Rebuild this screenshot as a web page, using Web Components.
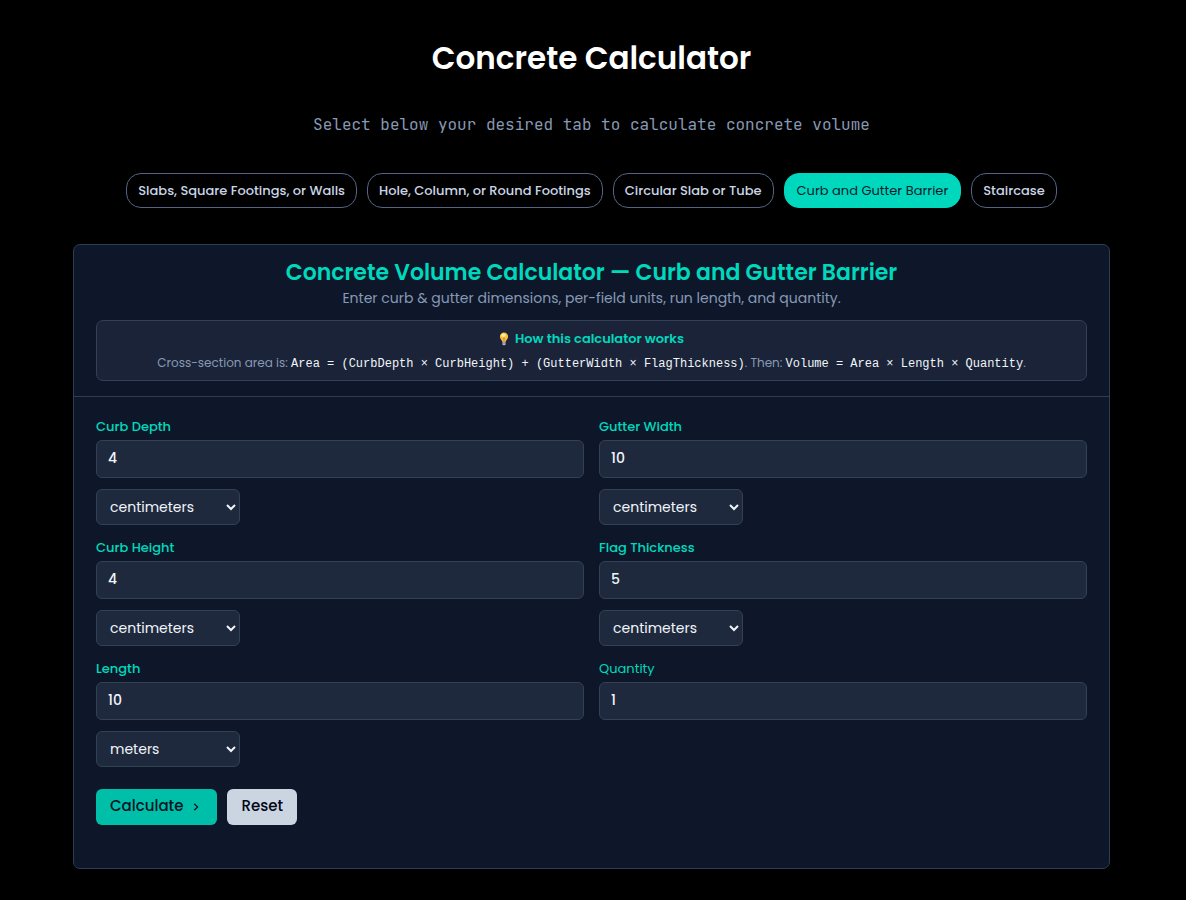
<!DOCTYPE html>
<html lang="en">
<head>
<meta charset="utf-8">
<meta name="viewport" content="width=device-width, initial-scale=1">
<title>Concrete Calculator</title>
<style>
  :root {
    --accent: #00d8bd;
    --accent-strong: #00bfa9;
    --panel: #0e1729;
    --note: #1a2338;
    --control: #1e293e;
    --line: #2c3d54;
    --control-line: #334155;
    --muted: #8799b5;
    --text: #f1f5f9;
    --mono: "JetBrains Mono", "Liberation Mono", "DejaVu Sans Mono", monospace;
    --code: Consolas, "Liberation Mono", "DejaVu Sans Mono", monospace;
  }
  body {
    margin: 0;
    background: #000;
    color: var(--text);
    font-family: Poppins, Inter, "Open Sans", sans-serif;
    font-size: 15px;
  }
</style>
</head>
<body>
<calc-page>
  <page-title slot="top">
    Concrete Calculator
    <span slot="lead">Select below your desired tab to calculate concrete volume</span>
  </page-title>
  <tab-list slot="top">
    <tab-pill>Slabs, Square Footings, or Walls</tab-pill>
    <tab-pill>Hole, Column, or Round Footings</tab-pill>
    <tab-pill>Circular Slab or Tube</tab-pill>
    <tab-pill selected>Curb and Gutter Barrier</tab-pill>
    <tab-pill>Staircase</tab-pill>
  </tab-list>
  <calc-panel>
    <span slot="heading">Concrete Volume Calculator — Curb and Gutter Barrier</span>
    <span slot="lead">Enter curb &amp; gutter dimensions, per-field units, run length, and quantity.</span>
    <help-note slot="note">
      <span slot="heading">How this calculator works</span>
      Cross-section area is: <formula-code>Area = (CurbDepth × CurbHeight) + (GutterWidth × FlagThickness)</formula-code>. Then: <formula-code>Volume = Area × Length × Quantity</formula-code>.
    </help-note>
    <measure-field label="Curb Depth" value="4" unit="centimeters"></measure-field>
    <measure-field label="Gutter Width" value="10" unit="centimeters"></measure-field>
    <measure-field label="Curb Height" value="4" unit="centimeters"></measure-field>
    <measure-field label="Flag Thickness" value="5" unit="centimeters"></measure-field>
    <measure-field label="Length" value="10" unit="meters"></measure-field>
    <measure-field label="Quantity" value="1"></measure-field>
    <action-button slot="actions" arrow>Calculate</action-button>
    <action-button slot="actions" secondary>Reset</action-button>
  </calc-panel>
</calc-page>

<script>
  class Base extends HTMLElement {
    constructor() {
      super();
      this.attachShadow({ mode: "open" });
    }
    connectedCallback() {
      this.shadowRoot.innerHTML = "<style>*{box-sizing:border-box}" + this.css() + "</style>" + this.html();
    }
  }

  customElements.define("calc-page", class extends Base {
    css() {
      return `:host{display:block;padding:33px 76px 31px 73px}
        main{display:block}`;
    }
    html() {
      return `<header><slot name="top"></slot></header><main><slot></slot></main>`;
    }
  });

  customElements.define("page-title", class extends Base {
    css() {
      return `:host{display:block;text-align:center}
        h1{margin:0;font-size:31px;line-height:50px;font-weight:600;color:#fff}
        p{margin:28px 0 0;font:16px/28px var(--mono);color:var(--muted)}`;
    }
    html() {
      return `<h1><slot></slot></h1><p><slot name="lead"></slot></p>`;
    }
  });

  customElements.define("tab-list", class extends Base {
    css() {
      return `:host{display:block;padding:34px 0 36px}
        div{display:flex;flex-wrap:wrap;justify-content:center;gap:10px}`;
    }
    html() {
      return `<div role="group" aria-label="Calculators"><slot></slot></div>`;
    }
  });

  customElements.define("tab-pill", class extends Base {
    css() {
      return `:host{display:block}
        button{height:35px;padding:0 11px;border:1px solid #536584;border-radius:15px;
          background:none;color:#cbd5e6;font-family:inherit;font-size:13px;font-weight:500;cursor:pointer;white-space:nowrap}
        :host([selected]) button{padding:0 12px;background:var(--accent);border-color:var(--accent);color:#0c1a2c;font-weight:400}`;
    }
    html() {
      return `<button type="button" aria-pressed="${this.hasAttribute("selected")}"><slot></slot></button>`;
    }
  });

  customElements.define("calc-panel", class extends Base {
    css() {
      return `:host{display:block;background:var(--panel);border:1px solid var(--line);border-radius:7px}
        header{padding:15px 22px;border-bottom:1px solid var(--line);text-align:center}
        h2{margin:0;font-size:22px;line-height:26px;font-weight:600;color:var(--accent)}
        p{margin:0 0 10px;font-size:14px;line-height:24px;color:var(--muted)}
        form{padding:20px 22px 43px}
        .fields{display:grid;grid-template-columns:1fr 1fr;gap:13px 15px}
        .actions{display:flex;gap:10px;margin-top:22px}`;
    }
    html() {
      return `<header><h2><slot name="heading"></slot></h2><p><slot name="lead"></slot></p><slot name="note"></slot></header>
        <form><div class="fields"><slot></slot></div><div class="actions"><slot name="actions"></slot></div></form>`;
    }
  });

  customElements.define("help-note", class extends Base {
    css() {
      return `:host{display:block;padding:6px 12px 5px;background:var(--note);border:1px solid var(--control-line);border-radius:7px}
        h3{display:flex;justify-content:center;align-items:center;gap:6px;margin:0;font-size:13px;line-height:24px;font-weight:600;color:var(--accent)}
        svg{display:block;width:10px;height:14px}
        p{margin:0;font-size:12px;line-height:24px;color:var(--muted)}`;
    }
    html() {
      return `<h3><svg viewBox="0 0 10 14" aria-hidden="true">
          <path d="M5 .5a4.1 4.1 0 0 0-4.1 4.2c0 2 1.8 2.9 2.3 5h3.6c.5-2.1 2.3-3 2.3-5A4.1 4.1 0 0 0 5 .5z" fill="#f9c03c"/>
          <path d="M4.1 5.6 4.5 9.8h1l.4-4.2z" fill="#e08a2c"/>
          <ellipse cx="4.4" cy="3.2" rx="2" ry="1.7" fill="#fff0a8"/>
          <path d="M3.5 9.6h3v2.6l-.8 1H4.3l-.8-1z" fill="#b9b3c6"/>
          <path d="M3.5 11.1h3" stroke="#817b94" stroke-width=".7"/>
        </svg><slot name="heading"></slot></h3><p><slot></slot></p>`;
    }
  });

  customElements.define("formula-code", class extends Base {
    css() {
      return `:host{display:inline}
        code{font:12px/20px var(--code);color:var(--text)}`;
    }
    html() { return `<code><slot></slot></code>`; }
  });

  customElements.define("measure-field", class extends Base {
    css() {
      return `:host{display:block}
        label{display:block;font-size:13px;line-height:20px;font-weight:500;color:var(--accent);margin-bottom:3px}
        :host(:not([unit])) label{font-weight:400}
        input,select{display:block;border:1px solid var(--control-line);border-radius:6px;background:var(--control);
          color:var(--text);font-family:inherit;font-size:14px}
        input{width:100%;height:38px;padding:0 11px 1px;font-weight:500;appearance:textfield}
        select{width:144px;height:36px;margin-top:11px;padding:0 0 1px 9px}`;
    }
    html() {
      const label = this.getAttribute("label");
      const value = this.getAttribute("value");
      const unit = this.getAttribute("unit");
      const units = ["millimeters", "centimeters", "meters", "inches", "feet", "yards"];
      const picker = unit ? `<select aria-label="${label} unit">${units.map(u =>
        `<option${u === unit ? " selected" : ""}>${u}</option>`).join("")}</select>` : "";
      return `<label for="value">${label}</label><input id="value" type="number" value="${value}">${picker}`;
    }
  });

  customElements.define("action-button", class extends Base {
    css() {
      return `:host{display:block}
        button{display:flex;align-items:center;gap:10px;height:36px;padding:0 18px 3px 14px;border:0;border-radius:6px;
          background:var(--accent-strong);color:#071423;font-family:inherit;font-size:15px;font-weight:500;cursor:pointer}
        :host([secondary]) button{padding:0 14px 3px;background:#cbd5e1;color:#020617}
        svg{display:block;width:6px;height:8px;margin-top:3px}`;
    }
    html() {
      const arrow = this.hasAttribute("arrow")
        ? `<svg viewBox="0 0 6 8" aria-hidden="true"><path d="M1.2 .8 4.6 4 1.2 7.2" fill="none" stroke="currentColor" stroke-width="1.3"/></svg>` : "";
      return `<button type="button"><slot></slot>${arrow}</button>`;
    }
  });
</script>
</body>
</html>
